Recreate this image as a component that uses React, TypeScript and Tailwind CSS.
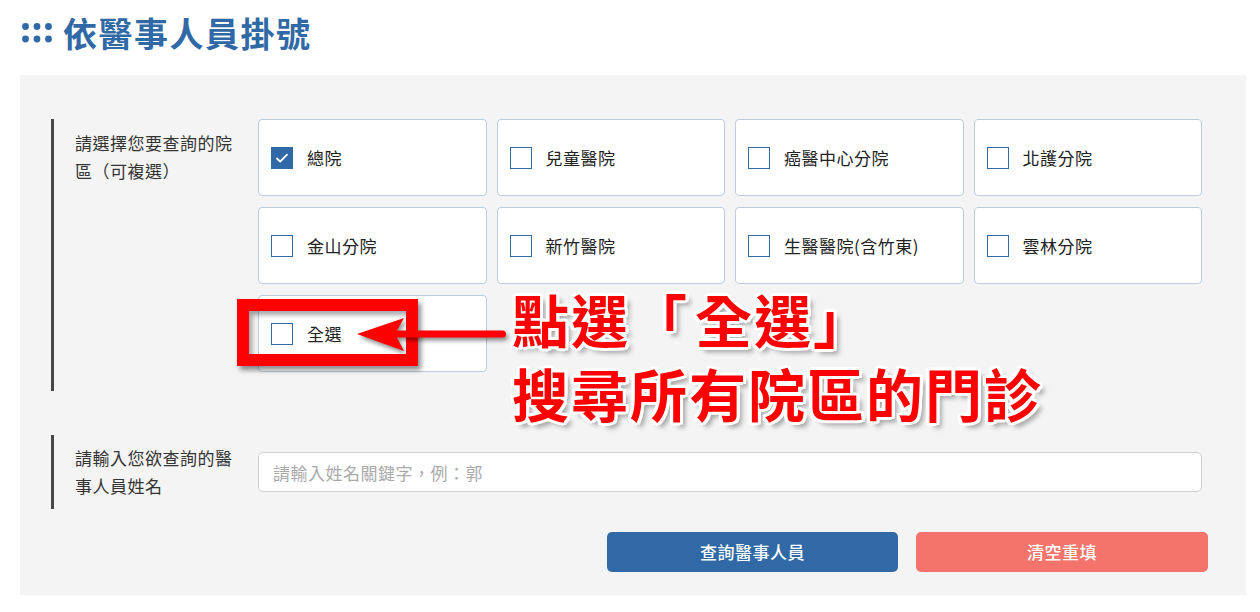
import { useState } from 'react'

const branches = [
  '總院',
  '兒童醫院',
  '癌醫中心分院',
  '北護分院',
  '金山分院',
  '新竹醫院',
  '生醫醫院(含竹東)',
  '雲林分院',
  '全選',
]

function CheckBox({ checked }: { checked: boolean }) {
  return checked ? (
    <span className="flex h-[22px] w-[22px] shrink-0 items-center justify-center bg-[#3069a6]">
      <svg width="14" height="14" viewBox="0 0 14 14" fill="none">
        <path d="M2 7.5l3.2 3.2L12 3.6" stroke="#fff" strokeWidth="1.8" strokeLinecap="round" strokeLinejoin="round" />
      </svg>
    </span>
  ) : (
    <span className="h-[22px] w-[22px] shrink-0 border-[1.5px] border-[#3069a6] bg-white" />
  )
}

export default function App() {
  const [picked] = useState<string[]>(['總院'])

  return (
    <div className="relative min-h-[612px] bg-white font-['Noto_Sans_CJK_TC','Noto_Sans',sans-serif] text-[#222]">
      {/* Title */}
      <div className="flex h-[65px] items-center gap-[10px] pl-[22px]">
        <svg width="31" height="21" viewBox="0 0 31 21" className="mt-[2px]">
          {[3.5, 15, 26.5].map((cx) =>
            [3.5, 16].map((cy) => <circle key={`${cx}-${cy}`} cx={cx} cy={cy} r="3.4" fill="#3069a6" />)
          )}
        </svg>
        <h1 className="text-[34px] font-bold leading-none tracking-[1.5px] text-[#3069a6]">依醫事人員掛號</h1>
      </div>

      {/* Form panel */}
      <div className="ml-[20px] mr-[14px] mt-[10px] bg-[#f4f4f4] pb-[23px] pt-[44px]">
        {/* Branches */}
        <div className="ml-[31px] mr-[44px] flex border-l-[3px] border-[#474747] pb-[19px]">
          <div className="w-[204px] shrink-0 pl-[21px] pr-[16px] pt-[10px] text-[17px] leading-[28px] tracking-[0.5px] text-[#333]">
            請選擇您要查詢的院區（可複選）
          </div>
          <div className="grid flex-1 grid-cols-4 gap-x-[10px] gap-y-[11px]">
            {branches.map((b) => (
              <label
                key={b}
                className="flex h-[77px] items-center gap-[14px] rounded-[4px] border border-[#bccbdd] bg-white pl-[12px] text-[17px] tracking-[0.5px] text-[#222]"
              >
                <CheckBox checked={picked.includes(b)} />
                <span>{b}</span>
              </label>
            ))}
          </div>
        </div>

        {/* Name */}
        <div className="ml-[31px] mr-[44px] mt-[44px] flex items-center border-l-[3px] border-[#474747] py-[17px]">
          <div className="-my-[8px] w-[204px] shrink-0 pl-[21px] pr-[16px] text-[17px] leading-[28px] tracking-[0.5px] text-[#333]">
            請輸入您欲查詢的醫事人員姓名
          </div>
          <input
            className="h-[40px] flex-1 rounded-[5px] border border-[#cfcfcf] bg-white pl-[14px] text-[17px] tracking-[0.5px] outline-none placeholder:text-[#aaaaaa]"
            placeholder="請輸入姓名關鍵字，例：郭"
          />
        </div>

        {/* Buttons */}
        <div className="mt-[23px] flex justify-end gap-[18px] pr-[38px]">
          <button className="h-[40px] w-[291px] rounded-[5px] bg-[#3069a6] text-[17px] font-medium tracking-[0.5px] text-white">
            查詢醫事人員
          </button>
          <button className="h-[40px] w-[292px] rounded-[5px] bg-[#f4736b] text-[17px] font-medium tracking-[0.5px] text-white">
            清空重填
          </button>
        </div>
      </div>

      {/* Annotation overlay */}
      <div className="pointer-events-none absolute left-[237px] top-[299px] h-[67px] w-[181px] border-[12px] border-[#ff0000] shadow-[3px_4px_5px_rgba(0,0,0,0.45),inset_3px_4px_5px_rgba(0,0,0,0.35)]" />
      <svg
        className="pointer-events-none absolute left-[350px] top-[310px] drop-shadow-[2px_3px_2px_rgba(0,0,0,0.45)]"
        width="165"
        height="50"
        viewBox="0 0 165 50"
      >
        <polygon points="7,24 54,8 45,24 54,41" fill="#ff0000" />
        <rect x="44" y="20.5" width="112" height="7" rx="3.5" fill="#ff0000" />
      </svg>
      <div className="pointer-events-none absolute left-[512px] top-[281px] text-[57px] font-bold leading-[74px] tracking-[2px] text-[#ff0000] [text-shadow:3px_0_0_#fff,-3px_0_0_#fff,0_3px_0_#fff,0_-3px_0_#fff,2px_2px_0_#fff,-2px_2px_0_#fff,2px_-2px_0_#fff,-2px_-2px_0_#fff,3px_2px_0_#fff,-3px_2px_0_#fff,3px_-2px_0_#fff,-3px_-2px_0_#fff,5px_5px_5px_rgba(0,0,0,0.35)]">
        <div>
          點選「<span className="ml-[6px]">全選</span>」
        </div>
        <div>搜尋所有院區的門診</div>
      </div>
    </div>
  )
}
